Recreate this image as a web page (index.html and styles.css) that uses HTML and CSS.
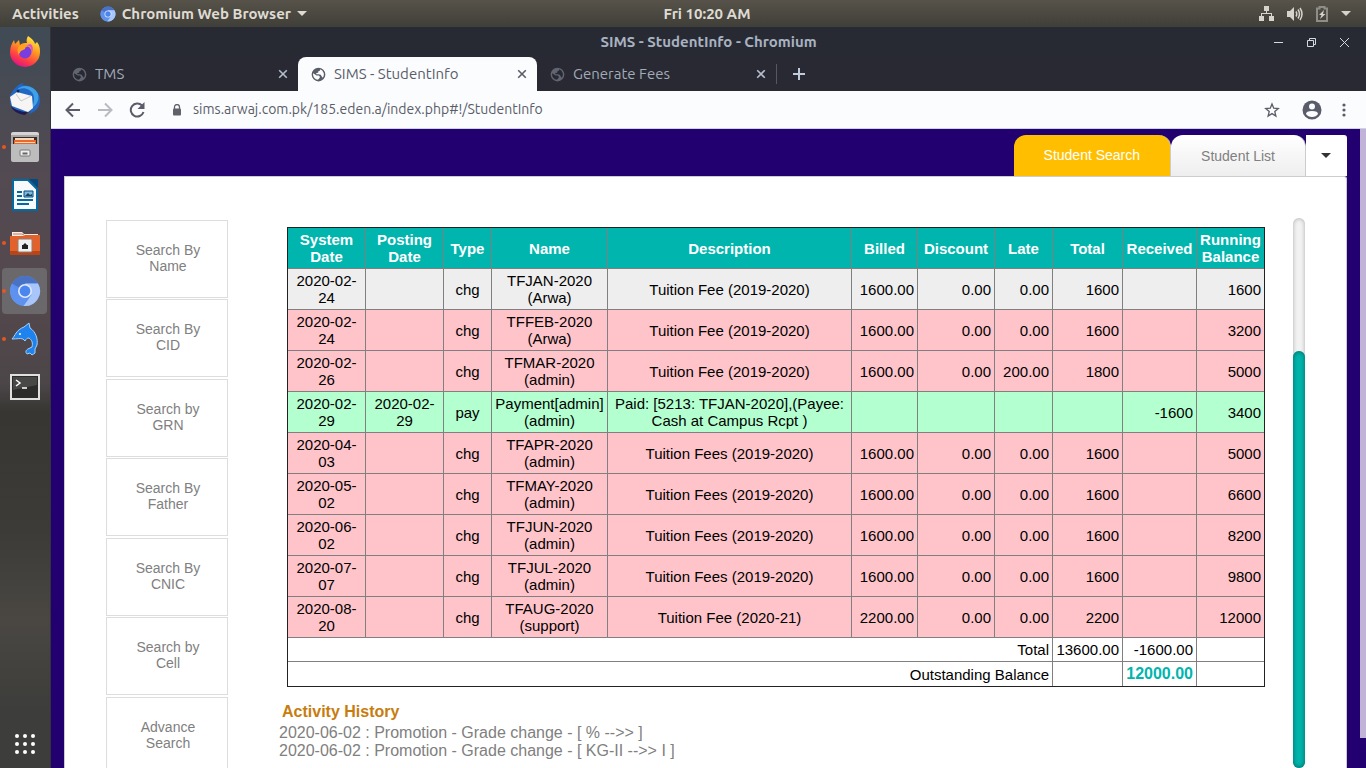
FILE: index.html
```html
<!DOCTYPE html>
<html lang="en">
<head>
<meta charset="utf-8">
<title>SIMS - StudentInfo</title>
<link rel="stylesheet" href="styles.css">
</head>
<body>
<svg class="defs" aria-hidden="true">
  <symbol id="globe" viewBox="0 0 24 24"><path d="M12 1a11 11 0 1 0 0 22 11 11 0 0 0 0-22zm-1 19.500C6.500 20 3.300 16.300 3.300 12c0-.7.1-1.300.2-1.900L9 13.500h3.500l2 2.500-1.500 2.500zM19 17l-1.500-1.500-2-3-3.500-1H8.500v-2l3-.5V7l3-1.500V3.700A8.700 8.700 0 0 1 19 17z" fill="currentColor" fill-rule="evenodd"/></symbol>
  <symbol id="cross" viewBox="0 0 10 10"><path d="M1.200 1.200l7.600 7.600M8.800 1.200L1.200 8.800" stroke="currentColor" stroke-width="1.600" fill="none"/></symbol>
  <symbol id="chromium" viewBox="0 0 32 32"><circle cx="16" cy="16" r="15" fill="#5b8def"/><path d="M16 16L3 8.500A15 15 0 0 1 29 8.500H16z" fill="#4a72c4"/><path d="M3 8.500A15 15 0 0 0 14.500 31l6-11L9.500 20z" fill="#5f92ee"/><path d="M29 8.500H16l6.500 11.200L14.500 31A15 15 0 0 0 29 8.500z" fill="#a9c6fa"/><circle cx="16" cy="16" r="7" fill="#dfe9fc"/><circle cx="16" cy="16" r="5.400" fill="#4b86ee"/></symbol>
</svg>

<header class="topbar">
  <div class="topbar-left">
    <button class="bar-button">Activities</button>
    <button class="bar-button app-menu"><svg width="16" height="16"><use href="#chromium"/></svg><span>Chromium Web Browser</span><svg width="10" height="5" viewBox="0 0 10 5"><path d="M0 0h10L5 5z" fill="currentColor"/></svg></button>
  </div>
  <button class="bar-button clock">Fri 10:20 AM</button>
  <div class="topbar-right">
    <svg width="15" height="15" viewBox="0 0 15 15" fill="#d6d3cc"><path d="M5 0h5v5H8v2h5v3h2v5h-5v-5h2V8H3v2h2v5H0v-5h2V7h5V5H5z"/></svg>
    <svg width="16" height="14" viewBox="0 0 16 14" fill="none" stroke="#d6d3cc"><path d="M0 4h3l4-4v14L3 10H0z" fill="#d6d3cc" stroke="none"/><path d="M9 4.500q1.500 2.500 0 5M11 2.500q3 4.500 0 9M13 1q4 6 0 12" stroke-width="1.500"/></svg>
    <svg width="12" height="16" viewBox="0 0 12 16"><path d="M1 2.500h2.500V1h5v1.500H11V15H1z" fill="none" stroke="#8f8d87" stroke-width="2"/><path d="M8 4L3 9h2.500L4 13l5.500-5H7z" fill="#d6d3cc"/></svg>
    <svg width="10" height="5" viewBox="0 0 10 5"><path d="M0 0h10L5 5z" fill="#d6d3cc"/></svg>
  </div>
</header>

<div class="desktop">
  <nav class="dock" aria-label="Dock">
    <button class="dock-item" aria-label="Firefox"><svg width="32" height="32" viewBox="0 0 32 32"><defs><linearGradient id="fx" x1="0.800" y1="0" x2="0.300" y2="1"><stop offset="0" stop-color="#fff24a"/><stop offset=".4" stop-color="#ff9a1f"/><stop offset=".75" stop-color="#ff3b47"/><stop offset="1" stop-color="#d9128f"/></linearGradient></defs><path d="M19 1c6 4 7 7 7 8l2-2c3 4 3 7 3 10a15 15 0 0 1-30 0c0-5 2-9 4-12l1 4 4-4 1 5c2-2 5-2 7-2-1-3 0-5 1-7z" fill="url(#fx)"/><circle cx="16" cy="17" r="6.500" fill="#7a3ee0"/><path d="M10 11c3-2 8-2 11 1-3-1-5 0-5 2l-4 2c-1 1-2 3-2 4-2-3-2-6 0-9z" fill="#ffa01f"/><path d="M16 11c5-2 8 3 6 8 3-4 2-9-1-10z" fill="#d34be0"/></svg></button>
    <button class="dock-item" aria-label="Thunderbird"><svg width="34" height="34" viewBox="0 0 34 34"><path d="M2 14C5 8 9 2 16 1l-2 2c9 0 18 6 18 15 0 8-5 12-11 14l2-3C12 32 3 28 2 20z" fill="#2168c4"/><path d="M8 9C13 4 22 6 25 12c3 7-1 13-3 15 5-2 10-8 8-15C26 3 13 1 8 9z" fill="#3da2e8"/><path d="M2 15l7-5 15 4 1 12-5 4-16-6z" fill="#f6f5f4"/><path d="M8 12l5 7 10-5" fill="none" stroke="#c8c8cc"/><circle cx="10" cy="9" r="1.500" fill="#102b58"/><path d="M3 24c4 4 11 6 17 6l-3 3C9 32 4 28 3 24z" fill="#211a50"/></svg></button>
    <button class="dock-item running" aria-label="Archive"><svg width="30" height="32" viewBox="0 0 30 32"><rect x="1" y="1" width="28" height="30" rx="2" fill="#a8a8a8"/><path d="M1 4q0-3 3-3h22q3 0 3 3z" fill="#d5d5d5"/><path d="M3 6h24v8H3z" fill="#3b2c25"/><path d="M4 9h22v6H4z" fill="#e8692c"/><path d="M5 7h19v2H5zM5 11h20v1H5z" fill="#f7d9c0"/><path d="M1 13h28v16l-2 2H3l-2-2z" fill="#bdbdbd"/><rect x="10" y="19" width="10" height="6" rx="1" fill="#eee" stroke="#777"/><path d="M12.500 21.500h5v2h-5z" fill="#666"/></svg></button>
    <button class="dock-item" aria-label="Writer"><svg width="26" height="32" viewBox="0 0 26 32"><path d="M1 1h15l9 9v21H1z" fill="#f7f9fa" stroke="#0369a3" stroke-width="2"/><path d="M17 0h9v9z" fill="#024a80"/><path d="M5 13h5M5 17h5M5 21h16M5 25h12" stroke="#0369a3" stroke-width="2"/><path d="M12 12h9v6h-9z" fill="#7fbbe0" stroke="#024a80"/><path d="M13 17l3-3 2 2 2-1v2z" fill="#184357"/></svg></button>
    <button class="dock-item running" aria-label="Files"><svg width="30" height="26" viewBox="0 0 30 26"><path d="M2 2h10l2 2h14v10H2z" fill="#f5eee8"/><path d="M3 4h9l2 1" stroke="#cf7652" fill="none"/><path d="M0 6h13l2-1h15v18q0 2-2 2H2q-2 0-2-2z" fill="#e3622b"/><path d="M0 21h30v2q0 2-2 2H2q-2 0-2-2z" fill="#b8451a"/><rect x="8" y="9" width="14" height="13" rx="1" fill="#f2f0ee" stroke="#8d7f76"/><path d="M12 19v-4h1l2-2 2 2h1v4z" fill="#222"/></svg></button>
    <button class="dock-item running current" aria-label="Chromium"><svg width="32" height="32"><use href="#chromium"/></svg></button>
    <button class="dock-item running" aria-label="MySQL Workbench"><svg width="28" height="34" viewBox="0 0 28 34"><path d="M1 17c3-3 4-9 12-12l5-4 1 5c6 4 8 11 7 17l-2 4v4l-3 2-2-2-3 1c-2-2-1-4 1-5l4-2c1-4 0-7-3-9-2 0-3 1-4 3l-2-2c-3-1-6 0-11 0z" fill="#1f83ef" stroke="#a8cff5"/><circle cx="9" cy="12" r="1" fill="#fff"/></svg></button>
    <button class="dock-item" aria-label="Terminal"><svg width="30" height="26" viewBox="0 0 30 26"><rect x="1" y="1" width="28" height="24" fill="#2c2c2a" stroke="#e0e0de" stroke-width="2"/><path d="M3 3h24v8L3 16z" fill="#484846"/><path d="M6 6l4 3-4 3M12 14h5" stroke="#fff" stroke-width="1.500" fill="none"/></svg></button>
    <button class="dock-item apps" aria-label="Show Applications"><svg width="20" height="20" viewBox="0 0 20 20" fill="#fff"><circle cx="2" cy="2" r="2"/><circle cx="10" cy="2" r="2"/><circle cx="18" cy="2" r="2"/><circle cx="2" cy="10" r="2"/><circle cx="10" cy="10" r="2"/><circle cx="18" cy="10" r="2"/><circle cx="2" cy="18" r="2"/><circle cx="10" cy="18" r="2"/><circle cx="18" cy="18" r="2"/></svg></button>
  </nav>

  <div class="window">
    <div class="titlebar">
      <div class="title">SIMS - StudentInfo - Chromium</div>
      <div class="window-buttons">
        <button aria-label="Minimize"><svg width="11" height="11" viewBox="0 0 11 11"><path d="M1 5.500h9" stroke="currentColor"/></svg></button>
        <button aria-label="Restore"><svg width="11" height="11" viewBox="0 0 11 11" fill="none" stroke="currentColor"><path d="M1.500 3.500h6v6h-6zM3.500 3.500v-2h6v6h-2"/></svg></button>
        <button aria-label="Close"><svg width="11" height="11" viewBox="0 0 11 11"><path d="M1 1l9 9M10 1l-9 9" stroke="currentColor"/></svg></button>
      </div>
    </div>
    <div class="browser-tabs">
      <div class="browser-tab"><svg class="favicon"><use href="#globe"/></svg><span>TMS</span><button aria-label="Close TMS"><svg width="10" height="10"><use href="#cross"/></svg></button></div>
      <div class="browser-tab active"><svg class="favicon"><use href="#globe"/></svg><span>SIMS - StudentInfo</span><button aria-label="Close SIMS"><svg width="10" height="10"><use href="#cross"/></svg></button></div>
      <div class="browser-tab"><svg class="favicon"><use href="#globe"/></svg><span>Generate Fees</span><button aria-label="Close Generate Fees"><svg width="10" height="10"><use href="#cross"/></svg></button></div>
      <button class="new-tab" aria-label="New tab"><svg width="12" height="12" viewBox="0 0 12 12"><path d="M6 0v12M0 6h12" stroke="currentColor" stroke-width="2"/></svg></button>
    </div>
    <div class="toolbar">
      <button aria-label="Back"><svg width="16" height="16" viewBox="0 0 16 16" fill="none" stroke="#5a5d69" stroke-width="2"><path d="M15 8H2M8 1.500L1.500 8 8 14.500"/></svg></button>
      <button aria-label="Forward"><svg width="16" height="16" viewBox="0 0 16 16" fill="none" stroke="#b9bbc0" stroke-width="2"><path d="M1 8h13M8 1.500L14.500 8 8 14.500"/></svg></button>
      <button aria-label="Reload"><svg width="16" height="16" viewBox="0 0 16 16"><path d="M13 3.500A6.500 6.500 0 1 0 14.500 10" fill="none" stroke="#5a5d69" stroke-width="2"/><path d="M15.500 0v7h-7z" fill="#5a5d69"/></svg></button>
      <svg class="lock" width="10" height="12" viewBox="0 0 10 12"><path d="M2.500 5V3a2.500 2.500 0 0 1 5 0v2" fill="none" stroke="#5f626b" stroke-width="1.300"/><rect x="1" y="4.500" width="8" height="7" rx="1" fill="#5f626b"/></svg>
      <input class="address" aria-label="Address" value="sims.arwaj.com.pk/185.eden.a/index.php#!/StudentInfo">
      <button aria-label="Bookmark"><svg width="16" height="16" viewBox="0 0 24 24"><path d="M12 3l2.600 6.300 6.800.6-5.200 4.400 1.600 6.700L12 17.400 6.200 21l1.600-6.700-5.200-4.400 6.800-.6z" fill="none" stroke="#5a5d69" stroke-width="2"/></svg></button>
      <button class="profile" aria-label="Profile"><svg width="20" height="20" viewBox="0 0 20 20"><circle cx="10" cy="10" r="9.500" fill="#5a5d69"/><circle cx="10" cy="6.500" r="3" fill="#fbfcfe"/><path d="M4 14q0-3 6-3t6 3q-2 3-6 3t-6-3z" fill="#fbfcfe"/></svg></button>
      <button aria-label="Menu"><svg width="4" height="14" viewBox="0 0 4 14" fill="#5a5d69"><circle cx="2" cy="2" r="1.600"/><circle cx="2" cy="7" r="1.600"/><circle cx="2" cy="12" r="1.600"/></svg></button>
    </div>

    <div class="viewport">
      <main class="page">
        <div class="page-tabs">
          <button class="page-tab selected">Student Search</button>
          <button class="page-tab">Student List</button>
          <button class="page-tab-more" aria-label="More tabs"><svg width="10" height="5" viewBox="0 0 10 5"><path d="M0 0h10L5 5z" fill="#333"/></svg></button>
        </div>
        <div class="panel">
          <nav class="search-menu" aria-label="Search">
            <a href="#name">Search By Name</a>
            <a href="#cid">Search By CID</a>
            <a href="#grn">Search by GRN</a>
            <a href="#father">Search By Father</a>
            <a href="#cnic">Search By CNIC</a>
            <a href="#cell">Search by Cell</a>
            <a href="#advance">Advance Search</a>
          </nav>
          <section class="details">
            <table class="ledger">
              <colgroup><col class="w-date"><col class="w-date"><col class="w-type"><col class="w-name"><col><col class="w-billed"><col class="w-discount"><col class="w-late"><col class="w-total"><col class="w-received"><col class="w-balance"></colgroup>
              <thead>
                <tr><th>System Date</th><th>Posting Date</th><th>Type</th><th>Name</th><th>Description</th><th>Billed</th><th>Discount</th><th>Late</th><th>Total</th><th>Received</th><th>Running Balance</th></tr>
              </thead>
              <tbody>
                <tr class="settled"><td>2020-02-24</td><td></td><td>chg</td><td>TFJAN-2020 (Arwa)</td><td>Tuition Fee (2019-2020)</td><td>1600.00</td><td>0.00</td><td>0.00</td><td>1600</td><td></td><td>1600</td></tr>
                <tr class="due"><td>2020-02-24</td><td></td><td>chg</td><td>TFFEB-2020 (Arwa)</td><td>Tuition Fee (2019-2020)</td><td>1600.00</td><td>0.00</td><td>0.00</td><td>1600</td><td></td><td>3200</td></tr>
                <tr class="due"><td>2020-02-26</td><td></td><td>chg</td><td>TFMAR-2020 (admin)</td><td>Tuition Fee (2019-2020)</td><td>1600.00</td><td>0.00</td><td>200.00</td><td>1800</td><td></td><td>5000</td></tr>
                <tr class="paid"><td>2020-02-29</td><td>2020-02-29</td><td>pay</td><td>Payment[admin] (admin)</td><td>Paid: [5213: TFJAN-2020],(Payee: Cash at Campus Rcpt )</td><td></td><td></td><td></td><td></td><td>-1600</td><td>3400</td></tr>
                <tr class="due"><td>2020-04-03</td><td></td><td>chg</td><td>TFAPR-2020 (admin)</td><td>Tuition Fees (2019-2020)</td><td>1600.00</td><td>0.00</td><td>0.00</td><td>1600</td><td></td><td>5000</td></tr>
                <tr class="due"><td>2020-05-02</td><td></td><td>chg</td><td>TFMAY-2020 (admin)</td><td>Tuition Fees (2019-2020)</td><td>1600.00</td><td>0.00</td><td>0.00</td><td>1600</td><td></td><td>6600</td></tr>
                <tr class="due"><td>2020-06-02</td><td></td><td>chg</td><td>TFJUN-2020 (admin)</td><td>Tuition Fees (2019-2020)</td><td>1600.00</td><td>0.00</td><td>0.00</td><td>1600</td><td></td><td>8200</td></tr>
                <tr class="due"><td>2020-07-07</td><td></td><td>chg</td><td>TFJUL-2020 (admin)</td><td>Tuition Fees (2019-2020)</td><td>1600.00</td><td>0.00</td><td>0.00</td><td>1600</td><td></td><td>9800</td></tr>
                <tr class="due"><td>2020-08-20</td><td></td><td>chg</td><td>TFAUG-2020 (support)</td><td>Tuition Fee (2020-21)</td><td>2200.00</td><td>0.00</td><td>0.00</td><td>2200</td><td></td><td>12000</td></tr>
              </tbody>
              <tfoot>
                <tr><td colspan="8">Total</td><td>13600.00</td><td>-1600.00</td><td></td></tr>
                <tr><td colspan="8">Outstanding Balance</td><td></td><td class="outstanding">12000.00</td><td></td></tr>
              </tfoot>
            </table>
            <h2>Activity History</h2>
            <ul class="history">
              <li>2020-06-02 : Promotion - Grade change - [ % --&gt;&gt; ]</li>
              <li>2020-06-02 : Promotion - Grade change - [ KG-II --&gt;&gt; I ]</li>
            </ul>
          </section>
          <div class="scroll-track"><div class="scroll-thumb"></div></div>
        </div>
      </main>
      <div class="page-scrollbar"><div class="page-scroll-thumb"></div></div>
    </div>
  </div>
</div>
</body>
</html>
```
FILE: styles.css
```css
* { box-sizing: border-box; }

body {
  margin: 0;
  height: 100vh;
  display: flex;
  flex-direction: column;
  overflow: hidden;
  font-family: "Liberation Sans", Arial, sans-serif;
}

button {
  margin: 0;
  padding: 0;
  border: 0;
  background: none;
  color: inherit;
  font: inherit;
}

svg { display: block; flex: none; }
.defs { position: absolute; width: 0; height: 0; }

.topbar {
  flex: none;
  height: 27px;
  display: grid;
  grid-template-columns: 1fr auto 1fr;
  align-items: center;
  padding: 0 15px 0 12px;
  background: linear-gradient(#57534a, #3f3e38);
  color: #dfdbd2;
  font: 700 15px/20px "Ubuntu", "Noto Sans", sans-serif;
}
.topbar-left { display: flex; gap: 21px; }
.app-menu { display: flex; align-items: center; gap: 6px; }
.clock { padding-left: 51px; }
.topbar-right { display: flex; align-items: center; justify-content: flex-end; gap: 13px; }

.desktop { flex: 1; min-height: 0; display: flex; }

.dock {
  flex: none;
  width: 51px;
  display: flex;
  flex-direction: column;
  gap: 2px;
  padding: 1px 3px 1px 2px;
  border-right: 1px solid #33343a;
  background: linear-gradient(#3f4b55 0, #534a52 20%, #53484c 38%, #4c4649 48%, #373632 52%, #3c3b37 68%, #4a4743 80%, #3d3d3b 92%);
}
.dock-item {
  position: relative;
  flex: none;
  height: 46px;
  display: flex;
  align-items: center;
  justify-content: center;
  border-radius: 4px;
}
.dock-item.current { background: #6a686b; }
.dock-item.running::before {
  content: "";
  position: absolute;
  left: 0;
  top: 21px;
  width: 4px;
  height: 4px;
  border-radius: 2px;
  background: #e95420;
}
.dock-item.apps { margin-top: auto; }

.window { flex: 1; min-width: 0; display: flex; flex-direction: column; }

.titlebar {
  flex: none;
  height: 30px;
  display: grid;
  grid-template-columns: 1fr auto 1fr;
  align-items: center;
  padding: 0 16px;
  background: #272a33;
  color: #a9b2c0;
  font: 700 15px/20px "Ubuntu", "Noto Sans", sans-serif;
}
.title { grid-column: 2; }
.window-buttons { display: flex; justify-content: flex-end; gap: 22px; color: #d3dae3; }

.browser-tabs {
  flex: none;
  height: 34px;
  display: flex;
  padding-left: 8px;
  background: #282932;
  color: #a2abb8;
  font: 15px/20px "Ubuntu", "Noto Sans", sans-serif;
}
.browser-tab {
  width: 239px;
  display: flex;
  align-items: center;
  gap: 8px;
  padding: 0 10px 0 13px;
}
.browser-tab span { flex: 1; }
.browser-tab button { color: #b4bdca; }
.favicon { width: 15px; height: 15px; color: #626570; }
.browser-tab.active { background: #fbfcfe; border-radius: 8px 8px 0 0; color: #5a5d69; }
.browser-tab.active .favicon,
.browser-tab.active button { color: #5a5d69; }
.new-tab {
  align-self: center;
  height: 20px;
  padding-left: 16px;
  border-left: 1px solid #555863;
  color: #c0cad8;
}

.toolbar {
  flex: none;
  height: 38px;
  display: flex;
  align-items: center;
  gap: 16px;
  padding: 0 20px 0 14px;
  background: #fbfcfe;
  border-bottom: 1px solid #cbd2e3;
}
.lock { margin-left: 11px; }
.address {
  flex: 1;
  min-width: 0;
  margin-left: -5px;
  padding: 0 0 2px;
  border: 0;
  background: none;
  color: #5a5d69;
  font: 14px/20px "Ubuntu", "Noto Sans", sans-serif;
}
.profile { padding: 0 4px 0 6px; }

.viewport {
  flex: 1;
  min-height: 0;
  display: flex;
  background: #220070;
}
.page {
  flex: 1;
  min-width: 0;
  display: flex;
  flex-direction: column;
  padding: 6px 13px 0;
}
.page-scrollbar { flex: none; width: 6px; padding-bottom: 30px; }
.page-scroll-thumb { height: 100%; background: #c1b2d8; }

.page-tabs { flex: none; height: 41px; display: flex; justify-content: flex-end; }
.page-tab {
  padding: 0 30px;
  border-radius: 12px 12px 0 0;
  border-right: 1px solid #ccc;
  background: linear-gradient(#fff, #eee);
  color: #808080;
  font-size: 14px;
  line-height: 20px;
}
.page-tab.selected { padding-bottom: 2px; background: #ffbf00; color: #fff; }
.page-tab-more {
  width: 41px;
  padding-right: 2px;
  display: flex;
  align-items: center;
  justify-content: center;
  border-radius: 0 3px 0 0;
  background: #fff;
}

.panel {
  flex: 1;
  min-height: 0;
  display: flex;
  align-items: stretch;
  padding: 41px 41px 0;
  border: 1px solid #ccc;
  border-bottom: 0;
  border-radius: 0 3px 0 0;
  background: #fff;
}

.search-menu { flex: none; width: 122px; padding-top: 2px; }
.search-menu a {
  display: flex;
  align-items: center;
  height: 78px;
  margin-bottom: 1px;
  padding: 0 25px 2px 27px;
  border: 1px solid #ddd;
  color: #808080;
  font-size: 14px;
  line-height: 16px;
  text-align: center;
  text-decoration: none;
  justify-content: center;
}
.search-menu a:nth-child(even) { margin-bottom: 2px; }

.details { flex: 1; min-width: 0; padding: 9px 28px 0 51px; }

.ledger {
  width: calc(100% - 8px);
  margin-left: 8px;
  table-layout: fixed;
  border-collapse: collapse;
  border: 1px solid #222;
  font-size: 15px;
  line-height: 17px;
  color: #000;
}
.w-date { width: 78px; }
.w-type { width: 48px; }
.w-name { width: 116px; }
.w-billed { width: 66px; }
.w-discount { width: 77px; }
.w-late { width: 58px; }
.w-total { width: 70px; }
.w-received { width: 74px; }
.w-balance { width: 68px; }

.ledger th, .ledger td { padding: 3px; border: 1px inset #808080; text-align: center; }
.ledger th { padding: 3px 0; background: #00b5ad; color: #fff; }
.ledger td:nth-child(n+6), .ledger tfoot td { text-align: right; }
.settled { background: #eee; }
.due { background: #ffc4ca; }
.paid { background: #b3ffcf; }
.ledger .outstanding { color: #00b5ad; font-size: 16px; line-height: 18px; font-weight: bold; }

.details h2 { margin: 16px 0 3px 3px; color: #c77d0e; font-size: 16px; line-height: 18px; }
.history { margin: 0; padding: 0; list-style: none; color: #808080; font-size: 16px; line-height: 18px; }

.scroll-track {
  flex: none;
  width: 12px;
  padding-top: 133px;
  border-radius: 6px;
  background: #f2f2f2;
  box-shadow: inset 0 0 4px #aaa;
}
.scroll-thumb {
  height: 100%;
  border-radius: 6px;
  background: #00b5ad;
  box-shadow: inset 0 0 5px #00675f;
}
```
